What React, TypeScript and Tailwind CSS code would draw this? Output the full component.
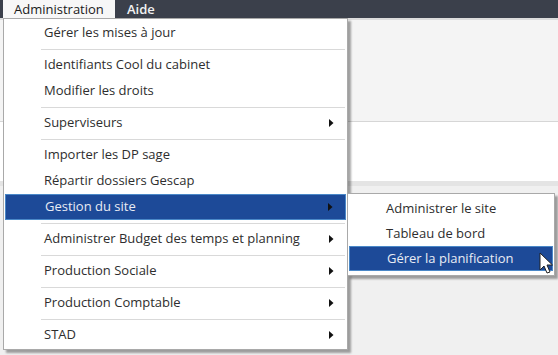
import { Fragment } from 'react';

type Item = { label: string; sub?: boolean; active?: boolean } | 'sep';

const items: Item[] = [
  { label: 'Gérer les mises à jour' },
  'sep',
  { label: 'Identifiants Cool du cabinet' },
  { label: 'Modifier les droits' },
  'sep',
  { label: 'Superviseurs', sub: true },
  'sep',
  { label: 'Importer les DP sage' },
  { label: 'Répartir dossiers Gescap' },
  { label: 'Gestion du site', sub: true, active: true },
  'sep',
  { label: 'Administrer Budget des temps et planning', sub: true },
  'sep',
  { label: 'Production Sociale', sub: true },
  'sep',
  { label: 'Production Comptable', sub: true },
  'sep',
  { label: 'STAD', sub: true },
];

const subItems = [
  { label: 'Administrer le site' },
  { label: 'Tableau de bord' },
  { label: 'Gérer la planification', active: true },
];

function Arrow() {
  return (
    <svg width="5" height="8" viewBox="0 0 5 8" className="shrink-0">
      <path d="M0 0 L4.5 4 L0 8 Z" fill="#111" />
    </svg>
  );
}

function Cursor() {
  return (
    <svg width="16" height="24" viewBox="0 0 16 24" className="absolute left-[539px] top-[252px]">
      <path
        d="M1 1 L1 18 L5 14 L8 21 L11 20 L8 13 L13.5 13 Z"
        fill="#fff"
        stroke="#222"
        strokeWidth="1"
        strokeLinejoin="round"
      />
    </svg>
  );
}

export default function App() {
  return (
    <div
      className="relative w-[558px] h-[355px] overflow-hidden bg-[#f0f0f0] text-[13px] text-[#2e2e2e]"
      style={{ fontFamily: '"Open Sans", "Noto Sans", sans-serif' }}
    >
      {/* menu bar */}
      <div className="flex h-[18px] bg-[#3b404b] pl-[3px]">
        <div className="flex items-center w-[112px] pl-[11px] bg-[#f7f7f7] text-[#1a1a1a] leading-none">
          Administration
        </div>
        <div className="flex items-center pl-[12px] text-[#f2f2f2] font-semibold leading-none">Aide</div>
      </div>

      {/* window content behind the menus */}
      <div className="h-[2px] bg-[#dcdcdc]" />
      <div className="h-[102px] bg-[#f4f4f4] border-b border-[#d6d6d6]" />
      <div className="h-[59px] bg-white" />
      <div className="h-[5px] bg-[#e4e4e4]" />

      {/* main dropdown */}
      <div className="absolute left-[3px] top-[18px] w-[345px] bg-white border border-[#a9a9a9] py-px shadow-[3px_3px_2px_rgba(0,0,0,0.35)]">
        {items.map((it, i) =>
          it === 'sep' ? (
            <div key={i} className="h-[6px] flex items-center pl-[37px] pr-[2px]">
              <div className="h-px w-full bg-[#d9d9d9]" />
            </div>
          ) : (
            <Fragment key={i}>
              <div
                className={
                  it.active
                    ? 'h-[26px] mx-px flex items-center pl-[39px] pr-[12px] bg-[#1d4a98] border border-[#4a88c8] text-[#e9ecf4]'
                    : 'h-[26px] flex items-center pl-[40px] pr-[13px]'
                }
              >
                <span className="flex-1 whitespace-nowrap">{it.label}</span>
                {it.sub && <Arrow />}
              </div>
            </Fragment>
          )
        )}
      </div>

      {/* sub menu */}
      <div className="absolute left-[347px] top-[193px] w-[208px] bg-white border border-[#a9a9a9] pt-[2px] pb-[4px] shadow-[3px_3px_2px_rgba(0,0,0,0.35)]">
        {subItems.map((s) =>
          s.active ? (
            <div
              key={s.label}
              className="h-[25px] mx-px flex items-center pl-[37px] bg-[#1d4a98] border border-[#4a88c8] text-[#e9ecf4] whitespace-nowrap"
            >
              {s.label}
            </div>
          ) : (
            <div key={s.label} className="h-[25px] flex items-center pl-[38px] whitespace-nowrap">
              {s.label}
            </div>
          )
        )}
      </div>

      <Cursor />
    </div>
  );
}
